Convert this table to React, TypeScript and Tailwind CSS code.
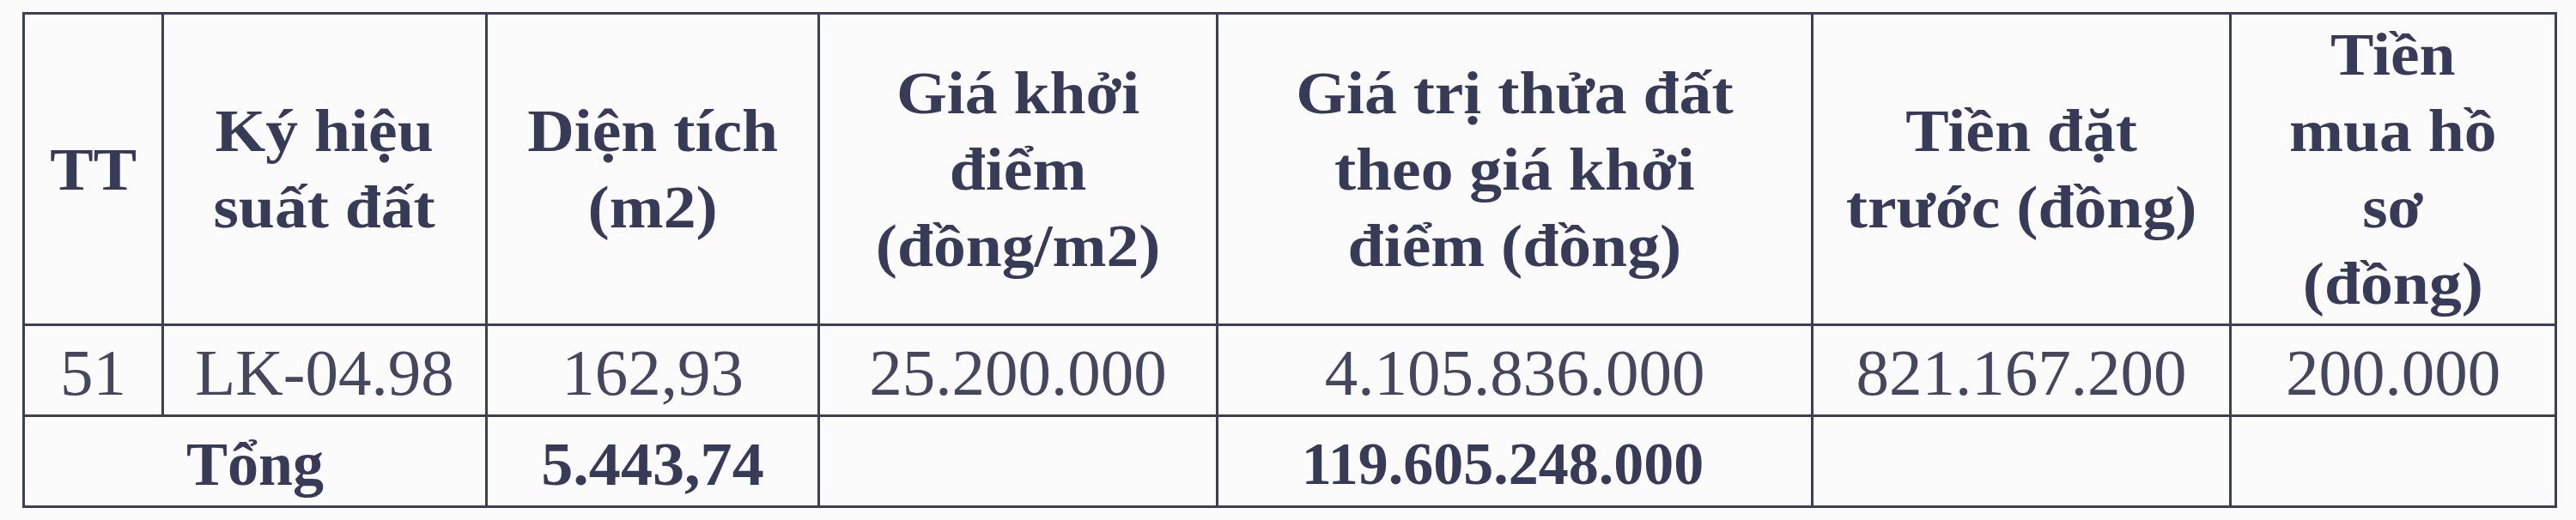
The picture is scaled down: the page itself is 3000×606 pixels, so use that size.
import React from 'react';

const HEADERS: string[][] = [
  ['TT'],
  ['Ký hiệu', 'suất đất'],
  ['Diện tích', '(m2)'],
  ['Giá khởi', 'điểm', '(đồng/m2)'],
  ['Giá trị thửa đất', 'theo giá khởi', 'điểm (đồng)'],
  ['Tiền đặt', 'trước (đồng)'],
  ['Tiền', 'mua hồ', 'sơ', '(đồng)'],
];

const ROW = ['51', 'LK-04.98', '162,93', '25.200.000', '4.105.836.000', '821.167.200', '200.000'];

const COL_WIDTHS = ['w-[162px]', 'w-[377px]', 'w-[387px]', 'w-[464px]', 'w-[693px]', 'w-[487px]', 'w-[379px]'];

const cell = 'border-[3px] border-[#3d4052] text-center align-middle p-0';
const bold = 'inline-block leading-none font-bold text-[#383b58] pt-[6px]';

export default function App() {
  return (
    <div
      className="w-[3000px] h-[606px] overflow-hidden bg-[#fbfbfb] pt-[14px] pl-[26px]"
      style={{ fontFamily: '"Liberation Serif", "Times New Roman", serif' }}
    >
      <table className="table-fixed border-collapse w-[2950px]">
        <colgroup>
          {COL_WIDTHS.map((w, i) => (
            <col key={i} className={w} />
          ))}
        </colgroup>
        <tbody>
          <tr className="h-[363px]">
            {HEADERS.map((lines, i) => (
              <td key={i} className={cell}>
                <span className="inline-block scale-x-[1.08] text-[70px] leading-[89px] font-bold text-[#383b58]">
                  {lines.map((l, j) => (
                    <React.Fragment key={j}>
                      {j > 0 && <br />}
                      {l}
                    </React.Fragment>
                  ))}
                </span>
              </td>
            ))}
          </tr>
          <tr className="h-[106px]">
            {ROW.map((v, i) => (
              <td key={i} className={cell}>
                <span className="inline-block text-[77px] leading-none text-[#44475e] pt-[6px]">{v}</span>
              </td>
            ))}
          </tr>
          <tr className="h-[106px]">
            <td colSpan={2} className={cell}>
              <span className={`${bold} text-[72px]`}>Tổng</span>
            </td>
            <td className={cell}>
              <span className={`${bold} text-[72px] scale-x-[1.03]`}>5.443,74</span>
            </td>
            <td className={cell}></td>
            <td className={cell}>
              <span className={`${bold} text-[70px] -translate-x-[14px]`}>119.605.248.000</span>
            </td>
            <td className={cell}></td>
            <td className={cell}></td>
          </tr>
        </tbody>
      </table>
    </div>
  );
}
